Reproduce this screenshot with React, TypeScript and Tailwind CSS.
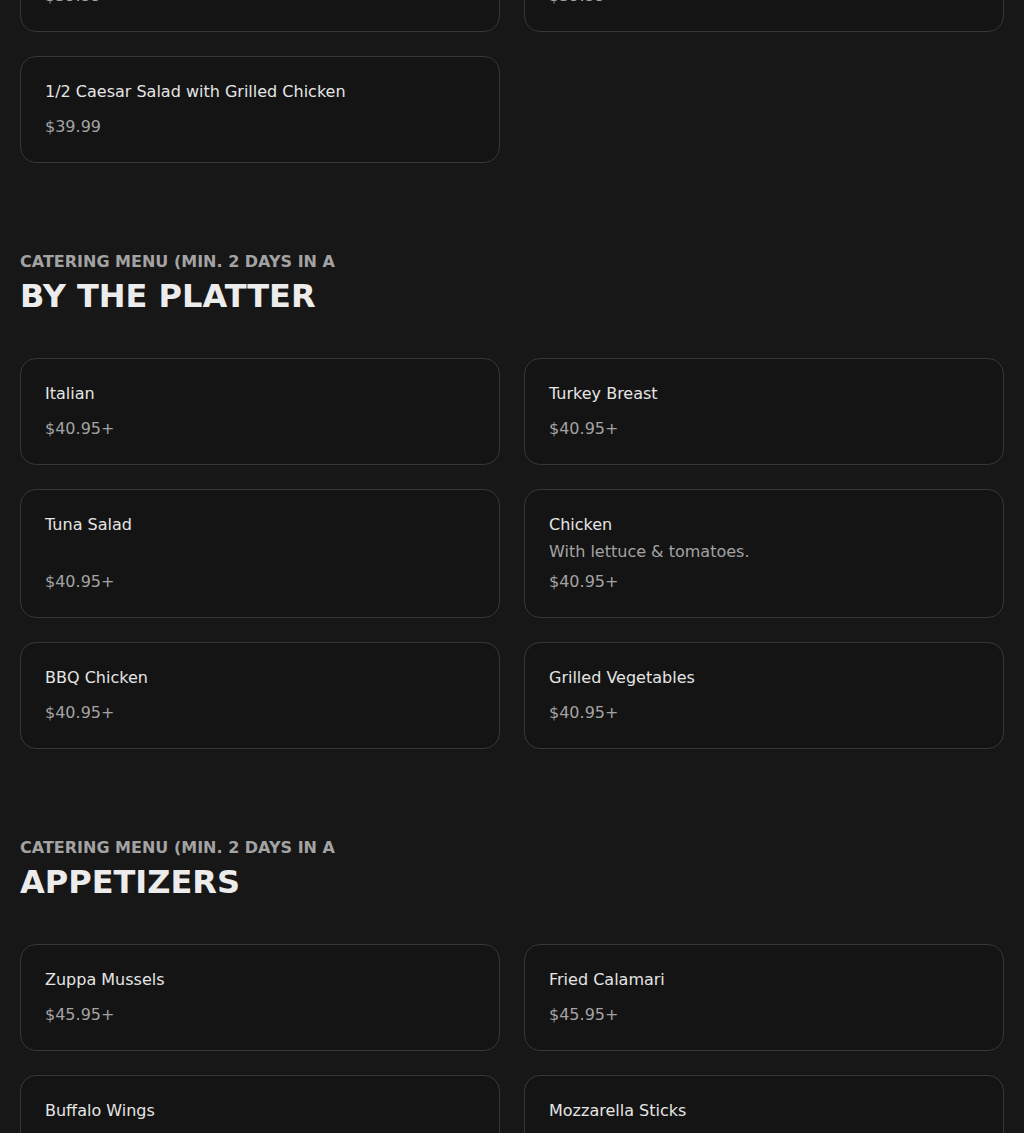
import React from "react";

type Item = { name: string; desc?: string; price: string };

const prevItems: Item[] = [
  { name: "Caesar Salad", price: "$39.99" },
  { name: "Garden Salad", price: "$39.99" },
  { name: "1/2 Caesar Salad with Grilled Chicken", price: "$39.99" },
];

const platterItems: Item[] = [
  { name: "Italian", price: "$40.95+" },
  { name: "Turkey Breast", price: "$40.95+" },
  { name: "Tuna Salad", price: "$40.95+" },
  { name: "Chicken", desc: "With lettuce & tomatoes.", price: "$40.95+" },
  { name: "BBQ Chicken", price: "$40.95+" },
  { name: "Grilled Vegetables", price: "$40.95+" },
];

const appetizerItems: Item[] = [
  { name: "Zuppa Mussels", price: "$45.95+" },
  { name: "Fried Calamari", price: "$45.95+" },
  { name: "Buffalo Wings", price: "$45.95+" },
  { name: "Mozzarella Sticks", price: "$45.95+" },
];

function Card({ item }: { item: Item }) {
  return (
    <div className="flex flex-col rounded-2xl border border-[#363636] bg-[#141414] p-6">
      <div className="text-base leading-snug text-[#e5e5e5]">{item.name}</div>
      <div className="mt-[5px] text-base leading-snug text-[#a3a3a3]">{item.desc ?? ""}</div>
      <div className="mt-auto pt-2 text-base leading-snug text-[#a3a3a3]">{item.price}</div>
    </div>
  );
}

function Grid({ items }: { items: Item[] }) {
  return (
    <div className="grid grid-cols-2 gap-6">
      {items.map((it) => (
        <Card key={it.name} item={it} />
      ))}
    </div>
  );
}

function Section({ title, items, className }: { title: string; items: Item[]; className: string }) {
  return (
    <section className={className}>
      <div className="text-base font-bold leading-6 text-[#a3a3a3]">CATERING MENU (MIN. 2 DAYS IN A</div>
      <h2 className="mt-0.5 text-[32px] font-bold leading-10 text-[#ececec]">{title}</h2>
      <div className="mt-[42px]">
        <Grid items={items} />
      </div>
    </section>
  );
}

export default function App() {
  return (
    <div className="h-[1133px] overflow-hidden bg-[#171717] font-['DejaVu_Sans',sans-serif]">
      <div className="-mt-[75px] flex flex-col px-5 pb-20">
        <Grid items={prevItems} />
        <Section className="mt-[87px] flex flex-col" title="BY THE PLATTER" items={platterItems} />
        <Section className="mt-[87px] flex flex-col" title="APPETIZERS" items={appetizerItems} />
      </div>
    </div>
  );
}
